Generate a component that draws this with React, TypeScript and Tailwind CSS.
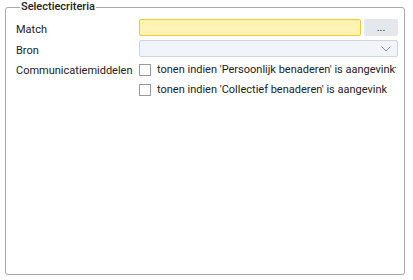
const Row = ({ label, children }: { label: string; children: React.ReactNode }) => (
  <div className="flex items-center h-[17px]">
    <div className="w-[123px] shrink-0 text-[11px] leading-[17px] text-[#222] pt-[3px]">{label}</div>
    <div className="flex-1 min-w-0">{children}</div>
  </div>
);

const Check = ({ text, width }: { text: string; width: string }) => (
  <label className="flex items-center h-[20px]">
    <span className="w-[12px] h-[12px] shrink-0 border border-[#9a9a9a] bg-white" />
    <span className={`ml-[6px] overflow-hidden whitespace-nowrap text-[11px] text-[#222] ${width}`}>{text}</span>
  </label>
);

const App = () => {
  return (
    <div className="w-[413px] h-[280px] bg-white font-['Roboto',sans-serif]">
      <fieldset className="ml-[5px] w-[400px] h-[275px] border border-[#a8a8a8] rounded-[3px] pl-[10px] pr-[6px]">
        <legend className="px-[1px] ml-[4px] text-[11px] leading-[14px] font-medium text-[#222]">
          Selectiecriteria
        </legend>

        <div className="mt-[5px] flex flex-col gap-[4px]">
          <Row label="Match">
            <div className="flex gap-[3px]">
              <input
                type="text"
                className="flex-1 h-[17px] rounded-[2px] border border-[#f5c92e] bg-[#fff4b3] outline-none"
              />
              <button className="w-[34px] h-[17px] rounded-[2px] bg-[#e4e7eb] text-[11px] leading-[10px] text-[#333]">
                ...
              </button>
            </div>
          </Row>
          <Row label="Bron">
            <div className="h-[17px] rounded-[2px] border border-[#cfd5db] bg-[#f1f5f9] flex items-center justify-end pr-[6px]">
              <svg width="10" height="6" viewBox="0 0 10 6" fill="none" stroke="#8a8f95" strokeWidth="1">
                <path d="M0.5 0.5 L5 5 L9.5 0.5" />
              </svg>
            </div>
          </Row>
        </div>

        <div className="mt-[3px] flex">
          <div className="w-[123px] shrink-0 text-[11px] text-[#222] h-[20px] leading-[20px] pt-[1px]">Communicatiemiddelen</div>
          <div className="flex flex-col">
            <Check text="tonen indien 'Persoonlijk benaderen' is aangevinkt" width="w-[239px]" />
            <Check text="tonen indien 'Collectief benaderen' is aangevinkt" width="w-[230px]" />
          </div>
        </div>
      </fieldset>
    </div>
  );
};

export default App;
